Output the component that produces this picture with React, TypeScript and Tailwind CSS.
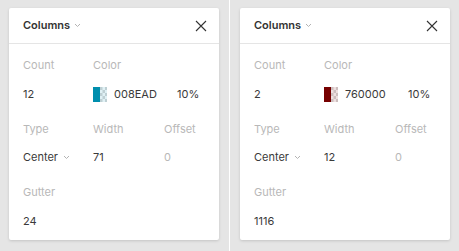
import React from "react";

type Panel = {
  count: string;
  color: string;
  hex: string;
  width: string;
  gutter: string;
};

function Chevron({ className }: { className?: string }) {
  return (
    <svg width="7" height="5" viewBox="0 0 7 5" className={className} fill="none">
      <path d="M1 1l2.5 2.5L6 1" stroke="#b3b3b3" strokeWidth="1" />
    </svg>
  );
}

function Swatch({ color }: { color: string }) {
  const cells = [];
  for (let r = 0; r < 5; r++) {
    for (let c = 0; c < 3; c++) {
      if ((r + c) % 2 === 0) {
        cells.push(<rect key={`${r}-${c}`} x={7 + c * 2.5} y={r * 3} width="2.5" height="3" fill="#d9d9d9" />);
      }
    }
  }
  return (
    <svg width="14" height="15" viewBox="0 0 14 15">
      <rect x="0" y="0" width="7" height="15" fill={color} />
      <rect x="7" y="0" width="7" height="15" fill="#ffffff" />
      {cells}
      <rect x="7" y="0" width="7" height="15" fill={color} opacity="0.12" />
    </svg>
  );
}

function ColumnsCard({ p }: { p: Panel }) {
  return (
    <div className="w-[210px] bg-white rounded-[2px] shadow-[0_1px_3px_rgba(0,0,0,0.15)] text-[11px] text-[#3a3a3a]">
      <div className="h-[36px] flex items-center justify-between border-b border-[#e5e5e5] pl-[14px] pr-[12px]">
        <div className="flex items-center gap-[4px]">
          <span className="font-semibold text-[#333]">Columns</span>
          <Chevron />
        </div>
        <svg width="12" height="12" viewBox="0 0 12 12" fill="none">
          <path d="M1 1l10 10M11 1L1 11" stroke="#333" strokeWidth="1.1" />
        </svg>
      </div>
      <div className="grid grid-cols-[70px_71px_1fr] pl-[14px] pt-[14px] pb-[11px]">
        <div className="h-[14px] flex items-center text-[#b8b8b8]">Count</div>
        <div className="h-[14px] col-span-2 flex items-center text-[#b8b8b8]">Color</div>

        <div className="mt-[14px] h-[16px] flex items-center">{p.count}</div>
        <div className="mt-[14px] h-[16px] col-span-2 flex items-center">
          <Swatch color={p.color} />
          <span className="ml-[7px] w-[63px]">{p.hex}</span>
          <span>10%</span>
        </div>

        <div className="mt-[20px] h-[14px] flex items-center text-[#b8b8b8]">Type</div>
        <div className="mt-[20px] h-[14px] flex items-center text-[#b8b8b8]">Width</div>
        <div className="mt-[20px] h-[14px] flex items-center text-[#b8b8b8]">Offset</div>

        <div className="mt-[13px] h-[16px] flex items-center gap-[5px]">
          <span>Center</span>
          <Chevron />
        </div>
        <div className="mt-[13px] h-[16px] flex items-center">{p.width}</div>
        <div className="mt-[13px] h-[16px] flex items-center text-[#b8b8b8]">0</div>

        <div className="mt-[20px] h-[14px] col-span-3 flex items-center text-[#b8b8b8]">Gutter</div>
        <div className="mt-[14px] h-[16px] col-span-3 flex items-center">{p.gutter}</div>
      </div>
    </div>
  );
}

export default function App() {
  const panels: Panel[] = [
    { count: "12", color: "#008EAD", hex: "008EAD", width: "71", gutter: "24" },
    { count: "2", color: "#760000", hex: "760000", width: "12", gutter: "1116" },
  ];

  return (
    <div
      className="w-[459px] h-[251px] flex bg-white"
      style={{ fontFamily: "Inter, 'Noto Sans', sans-serif" }}
    >
      {panels.map((p, i) => (
        <div
          key={i}
          className={`w-[229px] h-[251px] bg-[#e5e5e5] pt-[8px] ${i === 0 ? "pl-[9px]" : "ml-[1px] pl-[10px]"}`}
        >
          <ColumnsCard p={p} />
        </div>
      ))}
    </div>
  );
}
